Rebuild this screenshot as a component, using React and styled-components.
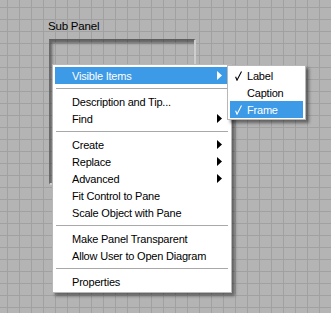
import React from "react";
import styled, { createGlobalStyle } from "styled-components";

const Global = createGlobalStyle`
  html, body { margin: 0; padding: 0; }
  body { width: 331px; height: 313px; overflow: hidden; font-family: "Liberation Sans", Arial, sans-serif; }
`;

const Canvas = styled.div`
  position: relative;
  width: 331px;
  height: 313px;
  box-sizing: border-box;
  padding: 19px 0 0 48px;
  background-color: #b4b4b4;
  background-image:
    linear-gradient(to right, #a1a1a1 1px, transparent 1px),
    linear-gradient(to bottom, #a1a1a1 1px, transparent 1px);
  background-size: 12px 12px;
  background-position: 7px 7px;
`;

const PanelLabel = styled.div`
  font-size: 11.5px;
  letter-spacing: -0.2px;
  line-height: 14px;
  color: #000;
  height: 14px;
`;

const PanelFrame = styled.div`
  margin: 6px 0 0 1px;
  width: 147px;
  height: 146px;
  box-sizing: border-box;
  border-top: 1px solid #5e5e5e;
  border-left: 1px solid #6a6a6a;
  border-right: 2px solid #cdcdcd;
  border-bottom: 2px solid #cdcdcd;
  box-shadow: inset 2px 3px 3px rgba(0, 0, 0, 0.45);
`;

const Menu = styled.div`
  position: absolute;
  left: ${(p) => p.$left}px;
  top: ${(p) => p.$top}px;
  width: ${(p) => p.$width}px;
  box-sizing: border-box;
  background: #fff;
  border: 1px solid #b8b8b8;
  padding: ${(p) => p.$pad}px 2px;
  box-shadow: 3px 3px 3px rgba(0, 0, 0, 0.45);
  font-size: 11px;
  letter-spacing: -0.2px;
  color: #000;
`;

const Item = styled.div`
  display: flex;
  align-items: center;
  height: 17px;
  padding: 0 7px 0 ${(p) => p.$indent}px;
  background: ${(p) => (p.$active ? "#3d9ae6" : "transparent")};
  color: ${(p) => (p.$active ? "#fff" : "#000")};
  white-space: nowrap;
`;

const ItemText = styled.span`
  flex: 1;
`;

const CheckSlot = styled.span`
  width: 12px;
  display: flex;
  align-items: center;
`;

const Separator = styled.div`
  height: 1px;
  margin: 4px 1px;
  background: #a8a8a8;
`;

const Arrow = ({ color }) => (
  <svg width="5" height="9" viewBox="0 0 5 9">
    <path d="M0 0 L5 4.5 L0 9 Z" fill={color} />
  </svg>
);

const Check = ({ color }) => (
  <svg width="7" height="10" viewBox="0 0 7 10">
    <path d="M0.6 5.8 L2 9.2 L6.5 0.6" fill="none" stroke={color} strokeWidth="1.1" />
  </svg>
);

const mainItems = [
  { t: "Visible Items", arrow: true, active: true },
  "sep",
  { t: "Description and Tip..." },
  { t: "Find", arrow: true },
  "sep",
  { t: "Create", arrow: true },
  { t: "Replace", arrow: true },
  { t: "Advanced", arrow: true },
  { t: "Fit Control to Pane" },
  { t: "Scale Object with Pane" },
  "sep",
  { t: "Make Panel Transparent" },
  { t: "Allow User to Open Diagram" },
  "sep",
  { t: "Properties" },
];

const subItems = [
  { t: "Label", checked: true },
  { t: "Caption" },
  { t: "Frame", checked: true, active: true },
];

export default function App() {
  return (
    <>
      <Global />
      <Canvas>
        <PanelLabel>Sub Panel</PanelLabel>
        <PanelFrame />
        <Menu $left={52} $top={64} $width={180} $pad={2}>
          {mainItems.map((it, i) =>
            it === "sep" ? (
              <Separator key={i} />
            ) : (
              <Item key={i} $indent={17} $active={it.active}>
                <ItemText>{it.t}</ItemText>
                {it.arrow && <Arrow color={it.active ? "#fff" : "#000"} />}
              </Item>
            )
          )}
        </Menu>
        <Menu $left={227} $top={65} $width={79} $pad={1}>
          {subItems.map((it, i) => (
            <Item key={i} $indent={5} $active={it.active}>
              <CheckSlot>{it.checked && <Check color={it.active ? "#fff" : "#000"} />}</CheckSlot>
              <ItemText>{it.t}</ItemText>
            </Item>
          ))}
        </Menu>
      </Canvas>
    </>
  );
}
